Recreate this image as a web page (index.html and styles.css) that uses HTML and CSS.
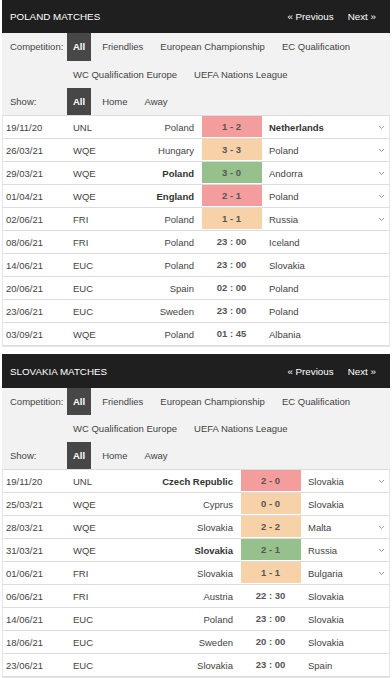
FILE: index.html
```html
<!DOCTYPE html>
<html>
<head>
<meta charset="utf-8">
<link rel="stylesheet" href="styles.css">
</head>
<body>
<section class="block pol">
  <div class="bar"><span class="title">POLAND MATCHES</span><span class="nav"><span class="nav-link">« Previous</span><span class="nav-link">Next »</span></span></div>
  <div class="filters">
    <div class="frow"><span class="flabel">Competition:</span><div class="opts"><span class="opt on">All</span><span class="opt">Friendlies</span><span class="opt">European Championship</span><span class="opt">EC Qualification</span><span class="opt">WC Qualification Europe</span><span class="opt">UEFA Nations League</span></div></div>
    <div class="frow"><span class="flabel">Show:</span><div class="opts"><span class="opt on">All</span><span class="opt">Home</span><span class="opt">Away</span></div></div>
  </div>
  <div class="tbl">
    <div class="row"><span class="date">19/11/20</span><span class="comp">UNL</span><span class="home">Poland</span><span class="score"><span class="box loss">1 - 2</span></span><span class="away b">Netherlands</span><span class="chev"><svg width="7" height="5" viewBox="0 0 7 5"><polyline points="1,1 3.5,3.5 6,1" fill="none" stroke="#9a9a9a" stroke-width="1"/></svg></span></div>
    <div class="row"><span class="date">26/03/21</span><span class="comp">WQE</span><span class="home">Hungary</span><span class="score"><span class="box draw">3 - 3</span></span><span class="away">Poland</span><span class="chev"><svg width="7" height="5" viewBox="0 0 7 5"><polyline points="1,1 3.5,3.5 6,1" fill="none" stroke="#9a9a9a" stroke-width="1"/></svg></span></div>
    <div class="row"><span class="date">29/03/21</span><span class="comp">WQE</span><span class="home b">Poland</span><span class="score"><span class="box win">3 - 0</span></span><span class="away">Andorra</span><span class="chev"><svg width="7" height="5" viewBox="0 0 7 5"><polyline points="1,1 3.5,3.5 6,1" fill="none" stroke="#9a9a9a" stroke-width="1"/></svg></span></div>
    <div class="row"><span class="date">01/04/21</span><span class="comp">WQE</span><span class="home b">England</span><span class="score"><span class="box loss">2 - 1</span></span><span class="away">Poland</span><span class="chev"><svg width="7" height="5" viewBox="0 0 7 5"><polyline points="1,1 3.5,3.5 6,1" fill="none" stroke="#9a9a9a" stroke-width="1"/></svg></span></div>
    <div class="row"><span class="date">02/06/21</span><span class="comp">FRI</span><span class="home">Poland</span><span class="score"><span class="box draw">1 - 1</span></span><span class="away">Russia</span><span class="chev"><svg width="7" height="5" viewBox="0 0 7 5"><polyline points="1,1 3.5,3.5 6,1" fill="none" stroke="#9a9a9a" stroke-width="1"/></svg></span></div>
    <div class="row"><span class="date">08/06/21</span><span class="comp">FRI</span><span class="home">Poland</span><span class="score"><span class="box">23 : 00</span></span><span class="away">Iceland</span><span class="chev"></span></div>
    <div class="row"><span class="date">14/06/21</span><span class="comp">EUC</span><span class="home">Poland</span><span class="score"><span class="box">23 : 00</span></span><span class="away">Slovakia</span><span class="chev"></span></div>
    <div class="row"><span class="date">20/06/21</span><span class="comp">EUC</span><span class="home">Spain</span><span class="score"><span class="box">02 : 00</span></span><span class="away">Poland</span><span class="chev"></span></div>
    <div class="row"><span class="date">23/06/21</span><span class="comp">EUC</span><span class="home">Sweden</span><span class="score"><span class="box">23 : 00</span></span><span class="away">Poland</span><span class="chev"></span></div>
    <div class="row"><span class="date">03/09/21</span><span class="comp">WQE</span><span class="home">Poland</span><span class="score"><span class="box">01 : 45</span></span><span class="away">Albania</span><span class="chev"></span></div>
  </div>
</section>

<section class="block svk">
  <div class="bar"><span class="title">SLOVAKIA MATCHES</span><span class="nav"><span class="nav-link">« Previous</span><span class="nav-link">Next »</span></span></div>
  <div class="filters">
    <div class="frow"><span class="flabel">Competition:</span><div class="opts"><span class="opt on">All</span><span class="opt">Friendlies</span><span class="opt">European Championship</span><span class="opt">EC Qualification</span><span class="opt">WC Qualification Europe</span><span class="opt">UEFA Nations League</span></div></div>
    <div class="frow"><span class="flabel">Show:</span><div class="opts"><span class="opt on">All</span><span class="opt">Home</span><span class="opt">Away</span></div></div>
  </div>
  <div class="tbl">
    <div class="row"><span class="date">19/11/20</span><span class="comp">UNL</span><span class="home b">Czech Republic</span><span class="score"><span class="box loss">2 - 0</span></span><span class="away">Slovakia</span><span class="chev"><svg width="7" height="5" viewBox="0 0 7 5"><polyline points="1,1 3.5,3.5 6,1" fill="none" stroke="#9a9a9a" stroke-width="1"/></svg></span></div>
    <div class="row"><span class="date">25/03/21</span><span class="comp">WQE</span><span class="home">Cyprus</span><span class="score"><span class="box draw">0 - 0</span></span><span class="away">Slovakia</span><span class="chev"></span></div>
    <div class="row"><span class="date">28/03/21</span><span class="comp">WQE</span><span class="home">Slovakia</span><span class="score"><span class="box draw">2 - 2</span></span><span class="away">Malta</span><span class="chev"><svg width="7" height="5" viewBox="0 0 7 5"><polyline points="1,1 3.5,3.5 6,1" fill="none" stroke="#9a9a9a" stroke-width="1"/></svg></span></div>
    <div class="row"><span class="date">31/03/21</span><span class="comp">WQE</span><span class="home b">Slovakia</span><span class="score"><span class="box win">2 - 1</span></span><span class="away">Russia</span><span class="chev"><svg width="7" height="5" viewBox="0 0 7 5"><polyline points="1,1 3.5,3.5 6,1" fill="none" stroke="#9a9a9a" stroke-width="1"/></svg></span></div>
    <div class="row"><span class="date">01/06/21</span><span class="comp">FRI</span><span class="home">Slovakia</span><span class="score"><span class="box draw">1 - 1</span></span><span class="away">Bulgaria</span><span class="chev"><svg width="7" height="5" viewBox="0 0 7 5"><polyline points="1,1 3.5,3.5 6,1" fill="none" stroke="#9a9a9a" stroke-width="1"/></svg></span></div>
    <div class="row"><span class="date">06/06/21</span><span class="comp">FRI</span><span class="home">Austria</span><span class="score"><span class="box">22 : 30</span></span><span class="away">Slovakia</span><span class="chev"></span></div>
    <div class="row"><span class="date">14/06/21</span><span class="comp">EUC</span><span class="home">Poland</span><span class="score"><span class="box">23 : 00</span></span><span class="away">Slovakia</span><span class="chev"></span></div>
    <div class="row"><span class="date">18/06/21</span><span class="comp">EUC</span><span class="home">Sweden</span><span class="score"><span class="box">20 : 00</span></span><span class="away">Slovakia</span><span class="chev"></span></div>
    <div class="row"><span class="date">23/06/21</span><span class="comp">EUC</span><span class="home">Slovakia</span><span class="score"><span class="box">23 : 00</span></span><span class="away">Spain</span><span class="chev"></span></div>
  </div>
</section>
</body>
</html>
```
FILE: styles.css
```css
html, body {
  margin: 0;
  padding: 0;
  background: #fff;
}
body {
  font-family: "Liberation Sans", Arial, sans-serif;
  font-size: 9.5px;
  color: #444;
  padding: 0 2px;
}
.block {
  margin-bottom: 7px;
}
.bar {
  background: #1f1f1f;
  color: #fff;
  height: 33px;
  display: flex;
  align-items: center;
  justify-content: space-between;
  padding: 0 7px 0 8px;
  font-size: 9.8px;
}
.svk .bar {
  height: 34px;
}
.nav {
  display: flex;
}
.nav-link {
  padding: 0 7px;
}
.filters {
  background: #f2f2f2;
  border-bottom: 1px solid #dcdcdc;
}
.frow {
  display: flex;
}
.flabel {
  width: 57px;
  padding-left: 8px;
  line-height: 27px;
  flex: none;
}
.opts {
  display: flex;
  flex-wrap: wrap;
  column-gap: 5px;
}
.opt {
  padding: 0 6px;
  line-height: 27px;
}
.pol .frow:first-child .opt {
  line-height: 27.5px;
}
.opt.on {
  background: #474747;
  color: #fff;
  font-weight: bold;
}
.tbl {
  border: 1px solid #e6e6e6;
  border-top: none;
}
.row {
  display: grid;
  height: 22px;
  border-bottom: 1px solid #dcdcdc;
  align-items: center;
}
.pol .row {
  grid-template-columns: 70px 50px 71px 75px 1fr 16px;
}
.svk .row {
  grid-template-columns: 70px 50px 110px 75px 1fr 16px;
}
.date {
  padding-left: 3px;
}
.home {
  text-align: right;
  white-space: nowrap;
}
.b {
  font-weight: bold;
  color: #333;
}
.score {
  align-self: start;
  display: flex;
  justify-content: center;
}
.box {
  width: 60px;
  height: 21px;
  line-height: 21px;
  text-align: center;
  font-weight: bold;
  color: #555;
}
.box.loss {
  background: #f49d9d;
}
.box.draw {
  background: #f7d1a8;
}
.box.win {
  background: #96c08c;
}
.away {
  white-space: nowrap;
}
.chev {
  display: flex;
  justify-content: center;
  align-items: center;
}
.chev svg {
  display: block;
}
```
